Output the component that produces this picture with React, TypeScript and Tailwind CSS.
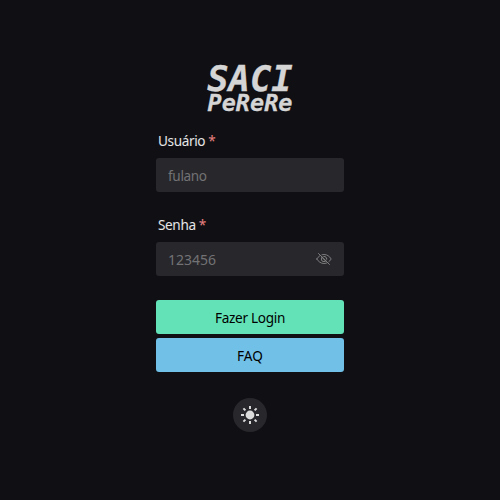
import type { ReactNode } from "react";

function EyeOffIcon() {
  return (
    <svg viewBox="0 0 16 16" className="size-4 text-[#7c7c7e]" fill="none" stroke="currentColor" strokeLinecap="round">
      <path d="M.8 8C2.5 5.2 5 3.5 8 3.5s5.5 1.7 7.2 4.5c-1.7 2.8-4.200 4.500-7.200 4.500S2.500 10.800.8 8Z" />
      <circle cx="8" cy="8" r="2.7" />
      <path d="M7 7l2 2" strokeWidth="1.5" />
      <path d="M3.200 1.800l11 11" stroke="#28282c" />
      <path d="M2.500 2.500l11 11" />
    </svg>
  );
}

function SunIcon() {
  return (
    <svg viewBox="-10 -10 20 20" className="size-5" fill="currentColor" stroke="currentColor" strokeWidth="2">
      <circle r="4.400" stroke="none" />
      <path d="M0-9v3M0 9V6M-9 0h3M9 0H6M-6.600-6.600l2 2M6.600 6.600l-2-2M-6.600 6.600l2-2M6.600-6.600l-2 2" />
    </svg>
  );
}

function Field({ label, placeholder, suffix, type = "text", size }: { label: string; placeholder: string; suffix?: ReactNode; type?: string; size: string }) {
  return (
    <div className="mb-6">
      <label className="flex h-[26px] items-center pb-2 pl-0.5 text-[13.6px] leading-[18px] tracking-[-0.38px] text-white/90">
        {label}
        <span className="ml-[3px] text-[#e88080]">*</span>
      </label>
      <div className="flex h-[34px] items-center rounded-[3px] bg-[#28282c] px-3">
        <input
          type={type}
          placeholder={placeholder}
          className={`h-full min-w-0 flex-1 bg-transparent text-white outline-none placeholder:text-[#727274] ${size}`}
        />
        {suffix}
      </div>
    </div>
  );
}

export default function App() {
  return (
    <main className="flex h-screen flex-col items-center overflow-hidden bg-[#101014] font-['Noto_Sans',sans-serif] text-[13.6px]">
      <h1 className="mt-[62px] flex w-[88px] flex-col items-center font-['DejaVu_Sans_Mono',monospace] font-bold italic text-[#d5d5d6] [-webkit-text-stroke:0.3px_#d5d5d6]">
        <span className="text-[35.5px] leading-[33px]">SACI</span>
        <span className="text-[23.5px] leading-[17px]">PeReRe</span>
      </h1>
      <form className="mt-5 w-[188px]">
        <Field label="Usuário" placeholder="fulano" size="text-[13.6px] tracking-[-0.35px]" />
        <Field
          label="Senha"
          placeholder="123456"
          type="password"
          size="text-sm"
          suffix={<EyeOffIcon />}
        />
        <div className="flex flex-col gap-1">
          <button type="button" className="h-[34px] rounded-[3px] bg-[#63e2b7] pt-0.5 tracking-[-0.32px] text-black">Fazer Login</button>
          <button type="button" className="h-[34px] rounded-[3px] bg-[#70c0e8] pt-0.5 text-black">FAQ</button>
        </div>
      </form>
      <button type="button" className="mt-[26px] flex size-[34px] items-center justify-center rounded-full bg-[#28282c] text-[#dbdbdc]">
        <SunIcon />
      </button>
    </main>
  );
}
